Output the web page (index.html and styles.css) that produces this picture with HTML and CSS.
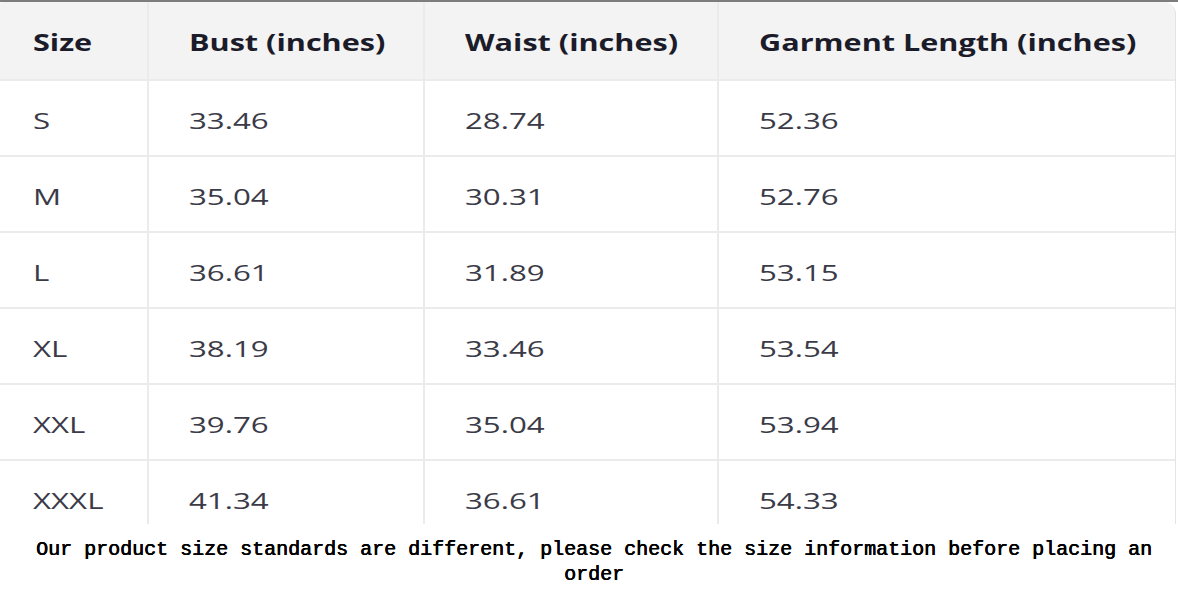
FILE: index.html
```html
<!DOCTYPE html>
<html lang="en">
<head>
<meta charset="utf-8">
<title>Size chart</title>
<link rel="stylesheet" href="styles.css">
</head>
<body>
<div class="topline"></div>
<div class="sheet">
  <table class="chart">
    <colgroup>
      <col class="c1"><col class="c2"><col class="c3"><col class="c4">
    </colgroup>
    <thead>
      <tr><th><span class="t">Size</span></th><th><span class="t">Bust (inches)</span></th><th><span class="t">Waist (inches)</span></th><th><span class="t">Garment Length (inches)</span></th></tr>
    </thead>
    <tbody>
      <tr><td><span class="t">S</span></td><td><span class="t">33.46</span></td><td><span class="t">28.74</span></td><td><span class="t">52.36</span></td></tr>
      <tr><td><span class="t">M</span></td><td><span class="t">35.04</span></td><td><span class="t">30.31</span></td><td><span class="t">52.76</span></td></tr>
      <tr><td><span class="t">L</span></td><td><span class="t">36.61</span></td><td><span class="t">31.89</span></td><td><span class="t">53.15</span></td></tr>
      <tr><td><span class="t">XL</span></td><td><span class="t">38.19</span></td><td><span class="t">33.46</span></td><td><span class="t">53.54</span></td></tr>
      <tr><td><span class="t">XXL</span></td><td><span class="t">39.76</span></td><td><span class="t">35.04</span></td><td><span class="t">53.94</span></td></tr>
      <tr><td><span class="t">XXXL</span></td><td><span class="t">41.34</span></td><td><span class="t">36.61</span></td><td><span class="t">54.33</span></td></tr>
    </tbody>
  </table>
</div>
<p class="note">Our product size standards are different, please check the size information before placing an order</p>
</body>
</html>
```
FILE: styles.css
```css
html, body {
  margin: 0;
  padding: 0;
  background: #ffffff;
}
body {
  width: 1178px;
  overflow: hidden;
  font-family: "Open Sans", "Liberation Sans", sans-serif;
}
.topline {
  height: 2px;
  background: #7d7d7d;
}
.sheet {
  height: 522px;
  overflow: hidden;
  margin-left: -7px;
  margin-right: 2px;
  border-radius: 12px 12px 0 0;
  border-right: 1px solid #e4e4e4;
}
.chart {
  width: 100%;
  border-collapse: collapse;
  table-layout: fixed;
}
.c1 { width: 155px; }
.c2 { width: 276px; }
.c3 { width: 294px; }
.chart th,
.chart td {
  text-align: left;
  padding: 3px 0 0 40px;
  border-left: 2px solid #ebebeb;
  border-bottom: 2px solid #ebebeb;
  white-space: nowrap;
}
.chart th:first-child,
.chart td:first-child {
  border-left: none;
}
.chart th {
  height: 74px;
  background: #f3f3f3;
  font-weight: 700;
  font-size: 23px;
  color: #1b1b2a;
}
.chart td {
  height: 71px;
  font-weight: 400;
  font-size: 22px;
  color: #3b3b48;
}
.t {
  display: inline-block;
  transform: scaleX(1.42);
  transform-origin: left center;
}
.chart th .t {
  transform: scaleX(1.33);
}
.note {
  margin: 13px 0 0 0;
  padding: 0 10px 0 20px;
  font-family: "Liberation Mono", "Courier New", monospace;
  font-weight: 400;
  font-size: 20px;
  line-height: 25px;
  text-align: center;
  color: #000000;
  text-shadow: 0.5px 0 0 #000000, 0 0.3px 0 #000000;
}
```
